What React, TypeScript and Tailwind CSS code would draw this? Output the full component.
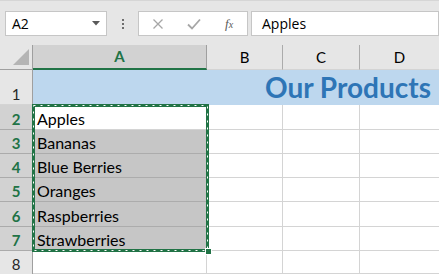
import React from "react";

const GREEN = "#217346";

function RowHeader({ n, sel }: { n: number; sel?: boolean }) {
  return (
    <div
      className={
        "flex items-end justify-center pb-[2px] border-r border-b text-[15px] leading-none " +
        (sel
          ? "bg-[#d2d2d2] border-r-[#9f9f9f] border-b-[#ababab] text-[#217346] font-bold"
          : "bg-[#e6e6e6] border-r-[#9f9f9f] border-b-[#d4d4d4] text-[#262626]")
      }
    >
      {n}
    </div>
  );
}

function Cell({ text, shade, last }: { text?: string; shade?: boolean; last?: boolean }) {
  return (
    <div
      className={
        "flex items-end pl-[4px] pb-[2px] border-r border-b text-[16px] leading-none text-black whitespace-nowrap " +
        (shade ? "bg-[#c6c6c6] border-[#acacac]" : "bg-white border-[#d4d4d4]") +
        (last ? " border-r-0" : "")
      }
    >
      {text}
    </div>
  );
}

export default function App() {
  const items = ["Apples", "Bananas", "Blue Berries", "Oranges", "Raspberries", "Strawberries"];
  return (
    <div
      className="w-[439px] h-[274px] overflow-hidden bg-[#e6e6e6] flex flex-col"
      style={{ fontFamily: "Lato, 'Open Sans', sans-serif" }}
    >
      {/* formula toolbar */}
      <div className="h-[45px] shrink-0 flex items-start pt-[10px] pl-[5px] border-t border-[#d6d6d6]">
        <div
          className="w-[102px] h-[25px] bg-white border border-[#c6c6c6] flex items-center pl-[6px] pr-[6px] text-[14px] text-black"
          style={{ fontFamily: "'Open Sans', 'Noto Sans', sans-serif" }}
        >
          <span className="flex-1">A2</span>
          <svg width="8" height="5" viewBox="0 0 8 5">
            <path d="M0 0 L8 0 L4 4.5 Z" fill="#5a5a5a" />
          </svg>
        </div>
        <div className="w-[31px] h-[25px] flex flex-col items-center justify-center gap-[2px]">
          <div className="w-[2px] h-[2px] bg-[#6e6e6e]" />
          <div className="w-[2px] h-[2px] bg-[#6e6e6e]" />
          <div className="w-[2px] h-[2px] bg-[#6e6e6e]" />
        </div>
        <div className="w-[110px] h-[25px] bg-white border border-[#c6c6c6] flex items-center">
          <svg width="12" height="12" viewBox="0 0 12 12" className="ml-[13px]">
            <path d="M1.5 1.5 L10.5 10.5 M10.5 1.5 L1.5 10.5" stroke="#a6a6a6" strokeWidth="1.3" fill="none" />
          </svg>
          <svg width="14" height="12" viewBox="0 0 14 12" className="ml-[23px]">
            <path d="M1 6.5 L5 10.5 L13 1.5" stroke="#a6a6a6" strokeWidth="1.8" fill="none" />
          </svg>
          <span
            className="ml-[24px] text-[13px] italic text-[#5a5a5a] leading-none"
            style={{ fontFamily: "'Liberation Serif', serif" }}
          >
            f<span className="text-[10px]">x</span>
          </span>
        </div>
        <div
          className="ml-[3px] flex-1 h-[25px] bg-white border border-[#c6c6c6] flex items-center pl-[10px] text-[14px] text-black"
          style={{ fontFamily: "'Open Sans', 'Noto Sans', sans-serif" }}
        >
          Apples
        </div>
      </div>

      {/* sheet */}
      <div className="relative flex-1 grid grid-cols-[33px_174px_76px_77px_1fr] grid-rows-[25px_35px_25px_24px_24px_24px_25px_24px_1fr]">
        {/* header row */}
        <div className="bg-[#e6e6e6] border-r border-b border-[#9f9f9f] flex items-end justify-end pr-[3px] pb-[4px]">
          <svg width="16" height="16" viewBox="0 0 16 16">
            <path d="M16 0 L16 16 L0 16 Z" fill="#b4b4b4" />
          </svg>
        </div>
        <div className="bg-[#d2d2d2] border-r border-[#9f9f9f] border-b-2 border-b-[#217346] flex items-center justify-center text-[15px] font-bold text-[#217346]">
          A
        </div>
        {["B", "C", "D"].map((c, i) => (
          <div
            key={c}
            className={
              "bg-[#e6e6e6] border-b border-b-[#d4d4d4] flex items-center justify-center text-[15px] text-black " +
              (i < 2 ? "border-r border-r-[#ababab]" : "")
            }
          >
            {c}
          </div>
        ))}

        {/* row 1 */}
        <RowHeader n={1} />
        <div className="col-span-4 bg-[#bdd7ee] flex items-end justify-end pr-[8px] pb-[4px] text-[28px] font-bold text-[#2e75b6] leading-none">
          Our Products
        </div>

        {/* rows 2-7 */}
        {items.map((t, i) => (
          <React.Fragment key={t}>
            <RowHeader n={i + 2} sel />
            <Cell text={t} shade={i > 0} />
            <Cell />
            <Cell />
            <Cell last />
          </React.Fragment>
        ))}

        {/* row 8 */}
        <div className="flex items-end justify-center pb-[2px] border-r border-[#9f9f9f] bg-[#e6e6e6] text-[15px] leading-none text-[#262626]">
          8
        </div>
        <Cell />
        <Cell />
        <Cell />
        <Cell last />

        {/* selection marquee (overlay) */}
        <div className="absolute left-[32px] top-[59px] w-[177px] h-[148px] pointer-events-none">
          <svg className="absolute inset-0" width="177" height="148">
            <rect x="1.5" y="1.5" width="174" height="145" fill="none" stroke={GREEN} strokeWidth="3" />
            <rect
              x="1.5"
              y="1.5"
              width="174"
              height="145"
              fill="none"
              stroke="white"
              strokeWidth="1"
              strokeDasharray="2 5"
            />
          </svg>
          <div
            className="absolute -right-[3px] -bottom-[3px] w-[7px] h-[7px] border border-white"
            style={{ backgroundColor: GREEN }}
          />
        </div>
      </div>
    </div>
  );
}
